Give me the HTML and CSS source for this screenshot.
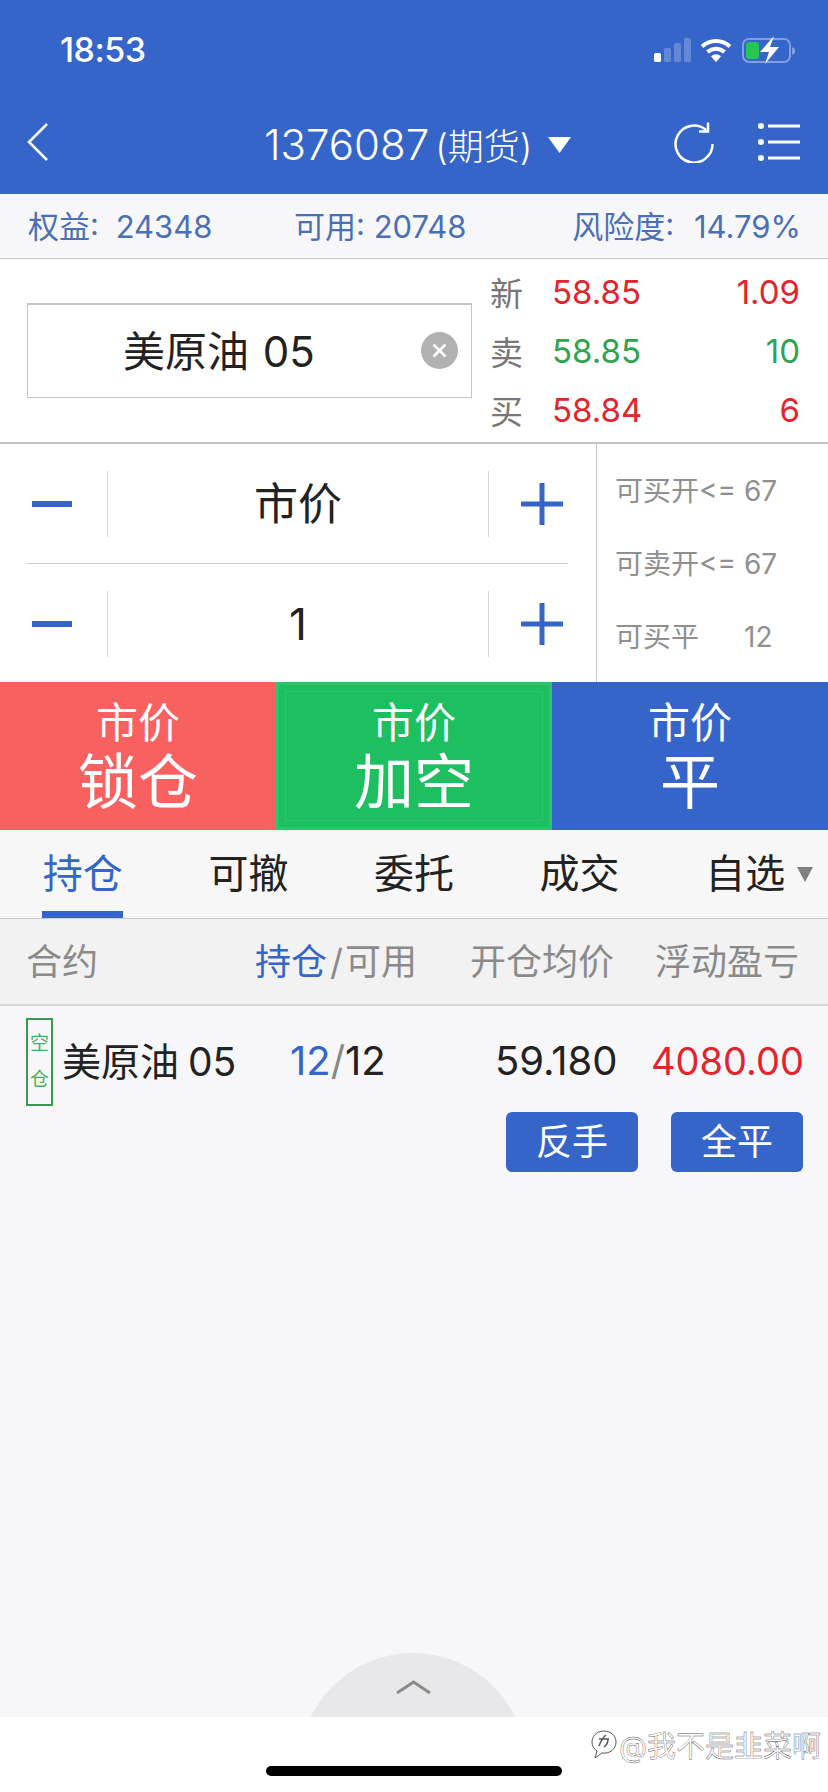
FILE: index.html
```html
<!DOCTYPE html>
<html lang="zh-CN">
<head>
    <meta charset="UTF-8">
    <meta name="viewport" content="width=device-width, initial-scale=1.0">
    <title>交易</title>
    <link rel="stylesheet" href="styles.css">
</head>
<body>
<div class="page">
    <header class="top">
        <div class="status-bar">
            <span class="time">18:53</span>
            <div class="status-icons">
                <svg class="signal" width="38" height="24" viewBox="0 0 38 24">
                    <rect x="0" y="15" width="7" height="9" rx="1.5" fill="#fff"/>
                    <rect x="10" y="10" width="7" height="14" rx="1.5" fill="#6488d8"/>
                    <rect x="20" y="5" width="7" height="19" rx="1.5" fill="#6488d8"/>
                    <rect x="30" y="0" width="7" height="24" rx="1.5" fill="#6488d8"/>
                </svg>
                <svg width="32" height="24" viewBox="0 0 32 24">
                    <path d="M2 8.500C10 1 22 1 30 8.500" fill="none" stroke="#fff" stroke-width="4"/>
                    <path d="M7.500 14C12.500 9.500 19.500 9.500 24.500 14" fill="none" stroke="#fff" stroke-width="4"/>
                    <path d="M11 18.500C14 15.500 18 15.500 21 18.500L16 24Z" fill="#fff"/>
                </svg>
                <svg width="54" height="28" viewBox="0 0 54 28">
                    <rect x="1" y="3" width="47" height="23" rx="6" fill="none" stroke="#7f9fe2" stroke-width="2"/>
                    <rect x="4" y="6" width="13" height="17" rx="3" fill="#27c653"/>
                    <path d="M50 11l3 2v4l-3 2z" fill="#7f9fe2"/>
                    <path d="M32 0L18 16h9l-4 12L37 11h-9z" fill="#fff"/>
                </svg>
            </div>
        </div>
        <nav class="nav-bar">
            <svg class="back" width="22" height="38" viewBox="0 0 22 38">
                <path d="M20 1L2 19l18 18" fill="none" stroke="#fff" stroke-width="2.500"/>
            </svg>
            <div class="title">
                <span class="account">1376087</span>
                <span class="kind">(期货)</span>
                <svg class="title-arrow" width="23" height="16" viewBox="0 0 23 16"><path d="M0 0h23L11.500 16z" fill="#fff"/></svg>
            </div>
            <svg class="refresh" width="42" height="42" viewBox="0 0 42 42">
                <path d="M33 9A18.500 18.500 0 1 0 39.500 23" fill="none" stroke="#fff" stroke-width="2.500"/>
                <path d="M26 10.500h9v-9" fill="none" stroke="#fff" stroke-width="2.500"/>
            </svg>
            <svg class="menu" width="42" height="40" viewBox="0 0 42 40">
                <circle cx="3" cy="4" r="3" fill="#fff"/>
                <circle cx="3" cy="20" r="3" fill="#fff"/>
                <circle cx="3" cy="36" r="3" fill="#fff"/>
                <rect x="10" y="2.500" width="32" height="3" fill="#fff"/>
                <rect x="10" y="18.500" width="32" height="3" fill="#fff"/>
                <rect x="10" y="34.500" width="32" height="3" fill="#fff"/>
            </svg>
        </nav>
    </header>

    <div class="account-info">
        <span class="spaced">权益: 24348</span>
        <span>可用: 20748</span>
        <span class="risk spaced">风险度: 14.79%</span>
    </div>

    <section class="quote">
        <div class="contract-box">
            <span class="contract-name">美原油 05</span>
            <svg class="clear" width="37" height="37" viewBox="0 0 37 37">
                <circle cx="18.500" cy="18.500" r="18.500" fill="#b1b1b1"/>
                <path d="M12.500 12.500l12 12M24.500 12.500l-12 12" stroke="#fff" stroke-width="2.500"/>
            </svg>
        </div>
        <div class="prices">
            <div class="price-row"><span class="price-label">新</span><span class="up">58.85</span><span class="up price-right">1.09</span></div>
            <div class="price-row"><span class="price-label">卖</span><span class="down">58.85</span><span class="down price-right">10</span></div>
            <div class="price-row"><span class="price-label">买</span><span class="up">58.84</span><span class="up price-right">6</span></div>
        </div>
    </section>

    <section class="order">
        <div class="steppers">
            <div class="stepper">
                <div class="step-btn">
                    <svg class="minus" width="40" height="6" viewBox="0 0 40 6"><rect width="40" height="6" fill="#3565c9"/></svg>
                </div>
                <div class="step-value">市价</div>
                <div class="step-btn">
                    <svg class="plus" width="42" height="42" viewBox="0 0 42 42"><path d="M0 18.500h42v5H0zM18.500 0h5v42h-5z" fill="#3565c9"/></svg>
                </div>
            </div>
            <div class="stepper">
                <div class="step-btn">
                    <svg class="minus" width="40" height="6" viewBox="0 0 40 6"><rect width="40" height="6" fill="#3565c9"/></svg>
                </div>
                <div class="step-value">1</div>
                <div class="step-btn">
                    <svg class="plus" width="42" height="42" viewBox="0 0 42 42"><path d="M0 18.500h42v5H0zM18.500 0h5v42h-5z" fill="#3565c9"/></svg>
                </div>
            </div>
        </div>
        <div class="limits">
            <div>可买开&lt;= 67</div>
            <div>可卖开&lt;= 67</div>
            <div class="limit-last"><span>可买平</span><span>12</span></div>
        </div>
    </section>

    <section class="actions">
        <div class="action red"><span class="action-top">市价</span><span class="action-main">锁仓</span></div>
        <div class="action green"><span class="action-top">市价</span><span class="action-main">加空</span></div>
        <div class="action blue"><span class="action-top">市价</span><span class="action-main">平</span></div>
    </section>

    <div class="tabs">
        <div class="tab active">持仓</div>
        <div class="tab">可撤</div>
        <div class="tab">委托</div>
        <div class="tab">成交</div>
        <div class="tab">自选<i class="tab-arrow"></i></div>
    </div>

    <div class="table-head">
        <span class="col-name">合约</span>
        <span class="col-hold"><em>持仓</em><b>/</b>可用</span>
        <span class="col-avg">开仓均价</span>
        <span class="col-pnl">浮动盈亏</span>
    </div>

    <main class="list">
        <div class="position">
            <div class="tag">空<br>仓</div>
            <span class="pos-name">美原油 05</span>
            <span class="pos-hold"><em>12</em><b>/</b>12</span>
            <span class="pos-avg">59.180</span>
            <span class="pos-pnl">4080.00</span>
        </div>
        <div class="pos-actions">
            <button class="pos-btn">反手</button>
            <button class="pos-btn">全平</button>
        </div>
        <div class="drawer">
            <svg width="35" height="14" viewBox="0 0 35 14"><path d="M1 13L17.500 2 34 13" fill="none" stroke="#8a8a8a" stroke-width="3"/></svg>
        </div>
    </main>

    <footer class="bottom">
        <div class="home-bar"></div>
        <div class="watermark">
            <svg width="28" height="32" viewBox="0 0 28 32">
                <path d="M14 3C6 3 2 9 2 14c0 4 2 7 5 9l-2 7 7-5c8 1 14-4 14-11 0-6-5-11-12-11z" fill="#fff" stroke="#555" stroke-width="1"/>
                <path d="M9 18c2-5 3-8 7-11M9 11h10M18 11c0 4-1 6-4 8" fill="none" stroke="#555" stroke-width="1.500"/>
            </svg>
            <span>@我不是韭菜啊</span>
        </div>
    </footer>
</div>
</body>
</html>
```

FILE: styles.css
```css
body {
    margin: 0;
    font-family: Inter, "Noto Sans CJK SC", sans-serif;
    color: #222;
    background: #fff;
}
em, i {
    font-style: normal;
}
b {
    font-weight: 400;
}
.page {
    position: relative;
    width: 828px;
    height: 1792px;
    display: flex;
    flex-direction: column;
    overflow: hidden;
}

/* header */
.top {
    height: 194px;
    background-color: #3565c9;
    color: #fff;
}
.status-bar {
    height: 98px;
    display: flex;
    justify-content: space-between;
    align-items: center;
    padding: 2px 32px 0 60px;
    box-sizing: border-box;
}
.time {
    font-size: 34px;
    font-weight: 500;
    letter-spacing: -0.5px;
    margin-bottom: 2px;
}
.status-icons {
    display: flex;
    align-items: center;
    gap: 10px;
}
.signal {
    margin-right: -2px;
}
.nav-bar {
    position: relative;
    height: 96px;
    display: flex;
    align-items: center;
    padding: 0 28px 8px 27px;
    box-sizing: border-box;
}
.title {
    position: absolute;
    left: 264px;
    top: 20px;
    display: flex;
    align-items: center;
    gap: 6px;
}
.account {
    font-size: 42px;
    font-weight: 300;
}
.kind {
    font-size: 36px;
    font-weight: 300;
}
.title-arrow {
    margin: 2px 0 0 10px;
}
.refresh {
    margin-left: auto;
    margin-right: -2px;
}
.menu {
    margin-left: 45px;
}

/* account summary */
.account-info {
    height: 65px;
    box-sizing: border-box;
    display: grid;
    grid-template-columns: 266px 278px 1fr;
    align-items: center;
    padding: 0 27px 4px 28px;
    background-color: #f7f7f9;
    border-bottom: 1px solid #c8c8c8;
    font-size: 31px;
    color: #4a6fb5;
}
.spaced {
    word-spacing: 8px;
}
.risk {
    text-align: right;
    word-spacing: 11px;
}

/* quote */
.quote {
    height: 183px;
    display: flex;
    align-items: center;
    padding: 0 28px 0 27px;
    border-bottom: 2px solid #c4c4c4;
}
.contract-box {
    width: 445px;
    height: 95px;
    box-sizing: border-box;
    display: flex;
    align-items: center;
    border: 1px solid #c4c4c4;
    border-top-width: 2px;
    padding: 0 13px 0 95px;
    margin-top: -1px;
}
.contract-name {
    font-size: 42px;
    padding-bottom: 5px;
    word-spacing: 2px;
}
.clear {
    margin-left: auto;
}
.prices {
    flex: 1;
    margin: 1px 0 0 18px;
}
.price-row {
    height: 59px;
    display: flex;
    align-items: center;
    font-size: 33px;
}
.price-label {
    width: 62px;
    color: #777;
}
.price-right {
    margin-left: auto;
}
.up {
    color: #e0252e;
}
.down {
    color: #2fa350;
}

/* order entry */
.order {
    height: 238px;
    display: flex;
}
.steppers {
    width: 541px;
    padding: 0 28px 0 27px;
}
.stepper {
    height: 119px;
    display: flex;
    align-items: center;
}
.stepper:first-child {
    border-bottom: 1px solid #c8c8c8;
}
.step-btn {
    width: 80px;
    display: flex;
    align-items: center;
}
.step-value + .step-btn {
    width: 79px;
}
.minus {
    margin-left: 5px;
}
.plus {
    margin-left: 32px;
}
.step-value {
    flex: 1;
    height: 66px;
    line-height: 66px;
    text-align: center;
    font-size: 44px;
    border-left: 1px solid #d4d4d4;
    border-right: 1px solid #d4d4d4;
}
.limits {
    flex: 1;
    border-left: 1px solid #c8c8c8;
    padding: 25px 0 0 18px;
    font-size: 28px;
    color: #8f8f8f;
}
.limits div {
    height: 73px;
}
.limits .limit-last {
    display: flex;
    align-items: baseline;
    gap: 45px;
}

/* action buttons */
.actions {
    height: 148px;
    display: flex;
    color: #fff;
}
.action {
    flex: 1;
    display: flex;
    flex-direction: column;
    align-items: center;
    padding-top: 16px;
}
.action-top {
    font-size: 42px;
    line-height: 49px;
}
.action-main {
    font-size: 60px;
    line-height: 70px;
}
.red {
    background-color: #f96060;
}
.green {
    background-color: #1dbf60;
    box-shadow: inset 0 0 0 3px #2ac66c, inset 0 0 0 9px #1dbf60, inset 0 0 0 10px #2bc56d;
}
.blue {
    background-color: #3565c9;
}

/* tabs */
.tabs {
    height: 88px;
    display: flex;
    background-color: #f7f7f7;
    border-bottom: 1px solid #c8c8c8;
}
.tab {
    position: relative;
    flex: 1;
    text-align: center;
    line-height: 88px;
    font-size: 40px;
}
.tab.active {
    color: #3565c9;
}
.tab.active::after {
    content: "";
    position: absolute;
    left: 42px;
    bottom: 0;
    width: 81px;
    height: 7px;
    background-color: #3565c9;
}
.tab-arrow {
    position: absolute;
    right: 15px;
    top: 37px;
    border-left: 8px solid transparent;
    border-right: 8px solid transparent;
    border-top: 15px solid #808080;
}

/* position table */
.table-head {
    height: 87px;
    box-sizing: border-box;
    display: flex;
    align-items: center;
    background-color: #f2f2f3;
    border-bottom: 2px solid #d8d8d8;
    padding: 0 0 6px 26px;
    font-size: 36px;
    color: #8a8a8a;
}
.col-name {
    width: 229px;
}
.col-hold {
    width: 215px;
}
.col-hold em {
    color: #3565c9;
}
.col-hold b {
    margin: 0 2px 0 3px;
}
.col-avg {
    width: 185px;
}
.list {
    position: relative;
    flex: 1;
    background-color: #f7f7f9;
}
.position {
    display: flex;
    align-items: center;
    padding: 12px 0 0 26px;
    font-size: 40px;
}
.tag {
    width: 27px;
    height: 88px;
    box-sizing: border-box;
    border: 2px solid #3a9a50;
    font-size: 19px;
    line-height: 36px;
    padding-top: 6px;
    text-align: center;
    color: #4caf60;
}
.pos-name {
    width: 228px;
    margin: -7px 0 0 9px;
    font-size: 39px;
    word-spacing: -2px;
}
.pos-hold {
    width: 205px;
    margin-top: -3px;
}
.pos-hold em {
    color: #3565c9;
}
.pos-hold b {
    color: #888;
}
.pos-avg {
    width: 156px;
    margin-top: -3px;
}
.pos-pnl {
    margin-top: -3px;
    font-size: 38px;
    color: #e0252e;
}
.pos-actions {
    display: flex;
    justify-content: flex-end;
    gap: 33px;
    padding: 6px 25px 0 0;
}
.pos-btn {
    width: 132px;
    height: 60px;
    padding: 0 0 6px;
    border: none;
    border-radius: 6px;
    background-color: #3565c9;
    color: #fff;
    font-family: inherit;
    font-size: 36px;
}
.drawer {
    position: absolute;
    left: 299px;
    bottom: -164px;
    width: 228px;
    height: 228px;
    box-sizing: border-box;
    border-radius: 50%;
    background-color: #e8e8ea;
    text-align: center;
    padding-top: 25px;
}
.bottom {
    position: relative;
    height: 75px;
    background-color: #fff;
    padding-top: 49px;
    box-sizing: border-box;
}
.home-bar {
    width: 296px;
    height: 10px;
    margin-left: 266px;
    border-radius: 5px;
    background-color: #000;
}
.watermark {
    position: absolute;
    left: 590px;
    top: 6px;
    display: flex;
    align-items: center;
    gap: 1px;
    font-size: 29px;
    color: #fff;
    -webkit-text-stroke: 0.4px #555;
}
```
